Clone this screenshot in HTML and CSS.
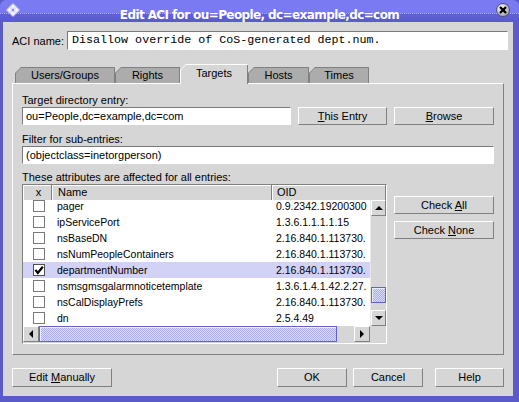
FILE: index.html
```html
<!DOCTYPE html>
<html>
<head>
<meta charset="utf-8">
<title>Edit ACI</title>
<link rel="stylesheet" href="styles.css">
</head>
<body>
<div class="window">
  <div class="titlebar">
    <svg class="app-icon" width="14" height="14" viewBox="0 0 14 14">
      <polygon points="7,0.5 13.5,7 7,13.5 0.5,7" fill="#f4f4ff" stroke="#c0c0ee" stroke-width="1"/>
      <path d="M4.2 3.3 L10.7 9.8 M3.3 4.2 L9.8 10.7 M9.8 3.3 L3.3 9.8 M10.7 4.2 L4.2 10.7" stroke="#c8c8f4" stroke-width="0.8"/>
      <rect x="6" y="6" width="2" height="2" fill="#8a8ad8" transform="rotate(45 7 7)"/>
    </svg>
    <div class="title">Edit ACI for ou=People, dc=example,dc=com</div>
    <svg class="close" width="14" height="14" viewBox="0 0 14 14">
      <defs>
        <radialGradient id="cg" cx="40%" cy="35%" r="70%">
          <stop offset="0" stop-color="#ffffff"/>
          <stop offset="1" stop-color="#9c9cae"/>
        </radialGradient>
      </defs>
      <circle cx="7" cy="7" r="6.5" fill="url(#cg)" stroke="#50507a" stroke-width="1"/>
      <path d="M4.6 4.6 L9.4 9.4 M9.4 4.6 L4.6 9.4" stroke="#000" stroke-width="2.2" stroke-linecap="round"/>
    </svg>
  </div>

  <div class="content">
    <div class="aci-row">
      <span class="aci-label">ACI name:</span>
      <div class="field aci-field">Disallow override of CoS-generated dept.num.</div>
    </div>

    <div class="tabs">
      <div class="tab w-users"><div class="tab-face">Users/Groups</div></div>
      <div class="tab w-rights"><div class="tab-face">Rights</div></div>
      <div class="tab tab-selected w-targets"><div class="tab-face">Targets</div></div>
      <div class="tab w-hosts"><div class="tab-face">Hosts</div></div>
      <div class="tab w-times"><div class="tab-face">Times</div></div>
    </div>

    <div class="panel">
      <div class="label">Target directory entry:</div>
      <div class="row">
        <div class="field grow">ou=People,dc=example,dc=com</div>
        <button class="btn w-this"><u>T</u>his Entry</button>
        <button class="btn w-browse"><u>B</u>rowse</button>
      </div>

      <div class="label gap-8">Filter for sub-entries:</div>
      <div class="field">(objectclass=inetorgperson)</div>

      <div class="label gap-7">These attributes are affected for all entries:</div>
      <div class="attr-row">
        <div class="table">
          <div class="thead">
            <div class="th col-x th-x">x</div>
            <div class="th col-name">Name</div>
            <div class="th col-oid">OID</div>
          </div>
          <div class="tbody-wrap">
            <div class="viewport">
              <div class="rows">
                <div class="tr"><div class="td col-x"><span class="cb"></span></div><div class="td col-name">pager</div><div class="td col-oid">0.9.2342.19200300</div></div>
                <div class="tr"><div class="td col-x"><span class="cb"></span></div><div class="td col-name">ipServicePort</div><div class="td col-oid">1.3.6.1.1.1.1.15</div></div>
                <div class="tr"><div class="td col-x"><span class="cb"></span></div><div class="td col-name">nsBaseDN</div><div class="td col-oid">2.16.840.1.113730.</div></div>
                <div class="tr"><div class="td col-x"><span class="cb"></span></div><div class="td col-name">nsNumPeopleContainers</div><div class="td col-oid">2.16.840.1.113730.</div></div>
                <div class="tr tr-sel"><div class="td col-x"><span class="cb"><svg width="10" height="10" viewBox="0 0 10 10"><path d="M1.4 4.8 L3.8 8 L8.8 1.8" stroke="#000" stroke-width="2.2" fill="none"/></svg></span></div><div class="td col-name">departmentNumber</div><div class="td col-oid">2.16.840.1.113730.</div></div>
                <div class="tr"><div class="td col-x"><span class="cb"></span></div><div class="td col-name">nsmsgmsgalarmnoticetemplate</div><div class="td col-oid">1.3.6.1.4.1.42.2.27.</div></div>
                <div class="tr"><div class="td col-x"><span class="cb"></span></div><div class="td col-name">nsCalDisplayPrefs</div><div class="td col-oid">2.16.840.1.113730.</div></div>
                <div class="tr"><div class="td col-x"><span class="cb"></span></div><div class="td col-name">dn</div><div class="td col-oid">2.5.4.49</div></div>
              </div>
            </div>
            <div class="vscroll">
              <div class="arrow"><span class="tri tri-up"></span></div>
              <div class="track"></div>
              <div class="thumb vthumb"></div>
              <div class="track-end"></div>
              <div class="arrow"><span class="tri tri-down"></span></div>
            </div>
          </div>
          <div class="hscroll">
            <div class="arrow"><span class="tri tri-left"></span></div>
            <div class="thumb hthumb"></div>
            <div class="track"></div>
            <div class="arrow"><span class="tri tri-right"></span></div>
            <div class="corner"></div>
          </div>
        </div>
        <div class="side-buttons">
          <button class="btn">Check <u>A</u>ll</button>
          <button class="btn">Check <u>N</u>one</button>
        </div>
      </div>
    </div>

    <div class="bottom">
      <button class="btn btn-lg w-edit">Edit <u>M</u>anually</button>
      <div class="spacer"></div>
      <button class="btn btn-lg w-ok">OK</button>
      <button class="btn btn-lg w-cancel">Cancel</button>
      <button class="btn btn-lg w-help">Help</button>
    </div>
  </div>
</div>
</body>
</html>
```

FILE: styles.css
```css
* { box-sizing: border-box; }

html, body {
  margin: 0;
  padding: 0;
}

body {
  width: 519px;
  height: 402px;
  overflow: hidden;
  background: #5a5ac8;
  font-family: "Liberation Sans", Arial, sans-serif;
  font-size: 11px;
  color: #000;
}

.window {
  width: 519px;
  height: 402px;
  display: flex;
  flex-direction: column;
  background: #5a5ac8;
}

/* ---------- title bar ---------- */
.titlebar {
  height: 22px;
  flex: none;
  display: grid;
  grid-template-columns: 1fr auto 1fr;
  align-items: start;
  border-radius: 6px 6px 0 0;
  background:
    repeating-linear-gradient(90deg, #a6a6ff 0 1px, #6a6ae4 1px 2px) 0 13px / 100% 1px no-repeat,
    linear-gradient(#7a7af2 0, #7a7af2 13px, #5f5fd6 14px, #5a5ad0 100%);
}

.app-icon {
  justify-self: start;
  margin: 3px 0 0 6px;
}

.title {
  color: #fff;
  font-family: "DejaVu Sans", Verdana, sans-serif;
  font-weight: bold;
  font-size: 12px;
  line-height: 14px;
  padding-top: 8px;
  white-space: nowrap;
  letter-spacing: -0.6px;
}

.close {
  justify-self: end;
  margin: 3px 9px 0 0;
}

/* ---------- content ---------- */
.content {
  flex: 1;
  margin: 0 6px 6px 3px;
  background: #d6d6d6;
  padding: 9px 5px 9px 9px;
  display: flex;
  flex-direction: column;
}

.aci-row {
  display: flex;
  align-items: center;
  height: 19px;
}

.aci-label {
  width: 55px;
  flex: none;
}

.field {
  background: #fff;
  border: 1px solid;
  border-color: #7a7a7a #fff #fff #7a7a7a;
  height: 18px;
  line-height: 16px;
  padding: 0 3px;
  white-space: nowrap;
  overflow: hidden;
}

.aci-field {
  flex: 1;
  height: 19px;
  line-height: 17px;
  padding-left: 4px;
  font-family: "Liberation Mono", "Courier New", monospace;
  font-size: 11.7px;
}

.grow { flex: 1; }

/* ---------- tabs ---------- */
.tabs {
  display: flex;
  align-items: flex-end;
  height: 19px;
  margin-top: 14px;
  padding-left: 3px;
  margin-right: 4px;
}

.tab {
  height: 16px;
  padding: 1px 1px 0 1px;
  background: #808080;
  clip-path: polygon(0 6px, 6px 0, 100% 0, 100% 100%, 0 100%);
}

.tab-face {
  height: 100%;
  background: #acacac;
  clip-path: polygon(0 5px, 5px 0, 100% 0, 100% 100%, 0 100%);
  text-align: center;
  line-height: 15px;
  white-space: nowrap;
}

.tab-selected {
  height: 20px;
  margin-bottom: -1px;
  padding: 1px 0 0 1px;
  background: #fff;
  z-index: 2;
}

.tab-selected .tab-face {
  background: #d6d6d6;
  border-right: 1px solid #808080;
  line-height: 17px;
}

.w-users { width: 100px; }
.w-rights { width: 65px; }
.w-targets { width: 68px; }
.w-hosts { width: 61px; }
.w-times { width: 60px; }

/* ---------- panel ---------- */
.panel {
  height: 272px;
  flex: none;
  margin-right: 4px;
  border: 1px solid;
  border-color: #fff #808080 #808080 #fff;
  padding: 10px 9px 10px 9px;
  display: flex;
  flex-direction: column;
}

.label {
  height: 13px;
  line-height: 13px;
  white-space: nowrap;
}

.gap-8 { margin-top: 8px; }
.gap-7 { margin-top: 7px; }

.row {
  display: flex;
  gap: 7px;
  height: 18px;
}

.btn {
  font: inherit;
  color: #000;
  background: #d6d6d6;
  border: 1px solid;
  border-color: #fff #808080 #808080 #fff;
  padding: 0;
  margin: 0;
  height: 18px;
  line-height: 16px;
  text-align: center;
  white-space: nowrap;
}

.btn u { text-underline-offset: 1px; }

.w-this { width: 89px; flex: none; }
.w-browse { width: 100px; flex: none; }

/* ---------- table ---------- */
.attr-row {
  display: flex;
  gap: 7px;
}

.table {
  width: 365px;
  height: 160px;
  flex: none;
  border: 1px solid;
  border-color: #808080 #fff #fff #808080;
  display: flex;
  flex-direction: column;
  background: #d6d6d6;
}

.thead {
  display: flex;
  height: 15px;
  flex: none;
}

.th {
  border-right: 1px solid #808080;
  box-shadow: inset 1px 1px 0 #fff;
  line-height: 15px;
  padding-left: 6px;
  white-space: nowrap;
}

.th-x {
  padding-left: 3px;
  text-align: center;
}

.thead .col-oid { flex: 1; padding-left: 5px; }

.col-x { width: 29px; flex: none; }
.col-name { width: 220px; flex: none; }

.tbody-wrap {
  display: flex;
  height: 126px;
  flex: none;
}

.viewport {
  width: 347px;
  flex: none;
  overflow: hidden;
  background: #fff;
}

.rows {
  margin-top: -2px;
  font-size: 10.5px;
}

.tr {
  display: flex;
  align-items: center;
  height: 16px;
  white-space: nowrap;
}

.tr-sel { background: #d2d2f6; }

.td.col-x {
  display: flex;
  justify-content: center;
  padding-left: 3px;
}

.td.col-name { padding-left: 5px; }
.td.col-oid { padding-left: 4px; }

.cb {
  width: 12px;
  height: 12px;
  border: 1px solid #7a7a7a;
  background: #fff;
  display: flex;
  align-items: center;
  justify-content: center;
}

.tr-sel .cb { border-color: #505050; }

/* ---------- scrollbars ---------- */
.vscroll {
  width: 16px;
  flex: none;
  display: flex;
  flex-direction: column;
  background: #d6d6d6;
  border-left: 1px solid #eaeaea;
}

.arrow {
  width: 16px;
  height: 16px;
  flex: none;
  background: #d6d6d6;
  border: 1px solid;
  border-color: #fff #808080 #808080 #fff;
  display: flex;
  align-items: center;
  justify-content: center;
}

.vscroll .arrow { width: 15px; }

.tri { width: 0; height: 0; }
.tri-up { border-left: 4px solid transparent; border-right: 4px solid transparent; border-bottom: 4px solid #000; }
.tri-down { border-left: 4px solid transparent; border-right: 4px solid transparent; border-top: 4px solid #000; }
.tri-left { border-top: 4px solid transparent; border-bottom: 4px solid transparent; border-right: 4px solid #000; }
.tri-right { border-top: 4px solid transparent; border-bottom: 4px solid transparent; border-left: 4px solid #000; }

.track { flex: 1; }
.track-end { height: 7px; flex: none; }

.thumb {
  flex: none;
  border: 1px solid #6262c8;
  background: repeating-conic-gradient(#aeaee6 0 25%, #dadaff 0 50%) 0 0 / 2px 2px;
  box-shadow: inset 1px 1px 0 #ececff;
}

.vthumb { height: 16px; }
.hthumb { width: 298px; height: 16px; }

.hscroll {
  height: 17px;
  flex: none;
  display: flex;
  align-items: flex-start;
  background: #d6d6d6;
}

.corner {
  width: 16px;
  height: 17px;
  flex: none;
  background: #d6d6d6;
}

.side-buttons {
  width: 100px;
  flex: none;
  display: flex;
  flex-direction: column;
  gap: 7px;
  padding-top: 12px;
}

/* ---------- bottom buttons ---------- */
.bottom {
  display: flex;
  margin-top: 13px;
  margin-right: 4px;
  height: 19px;
  flex: none;
}

.btn-lg { height: 19px; line-height: 17px; }

.spacer { flex: 1; }

.w-edit { width: 100px; }
.w-ok { width: 70px; }
.w-cancel { width: 70px; margin-left: 6px; }
.w-help { width: 69px; margin-left: 12px; }
```
